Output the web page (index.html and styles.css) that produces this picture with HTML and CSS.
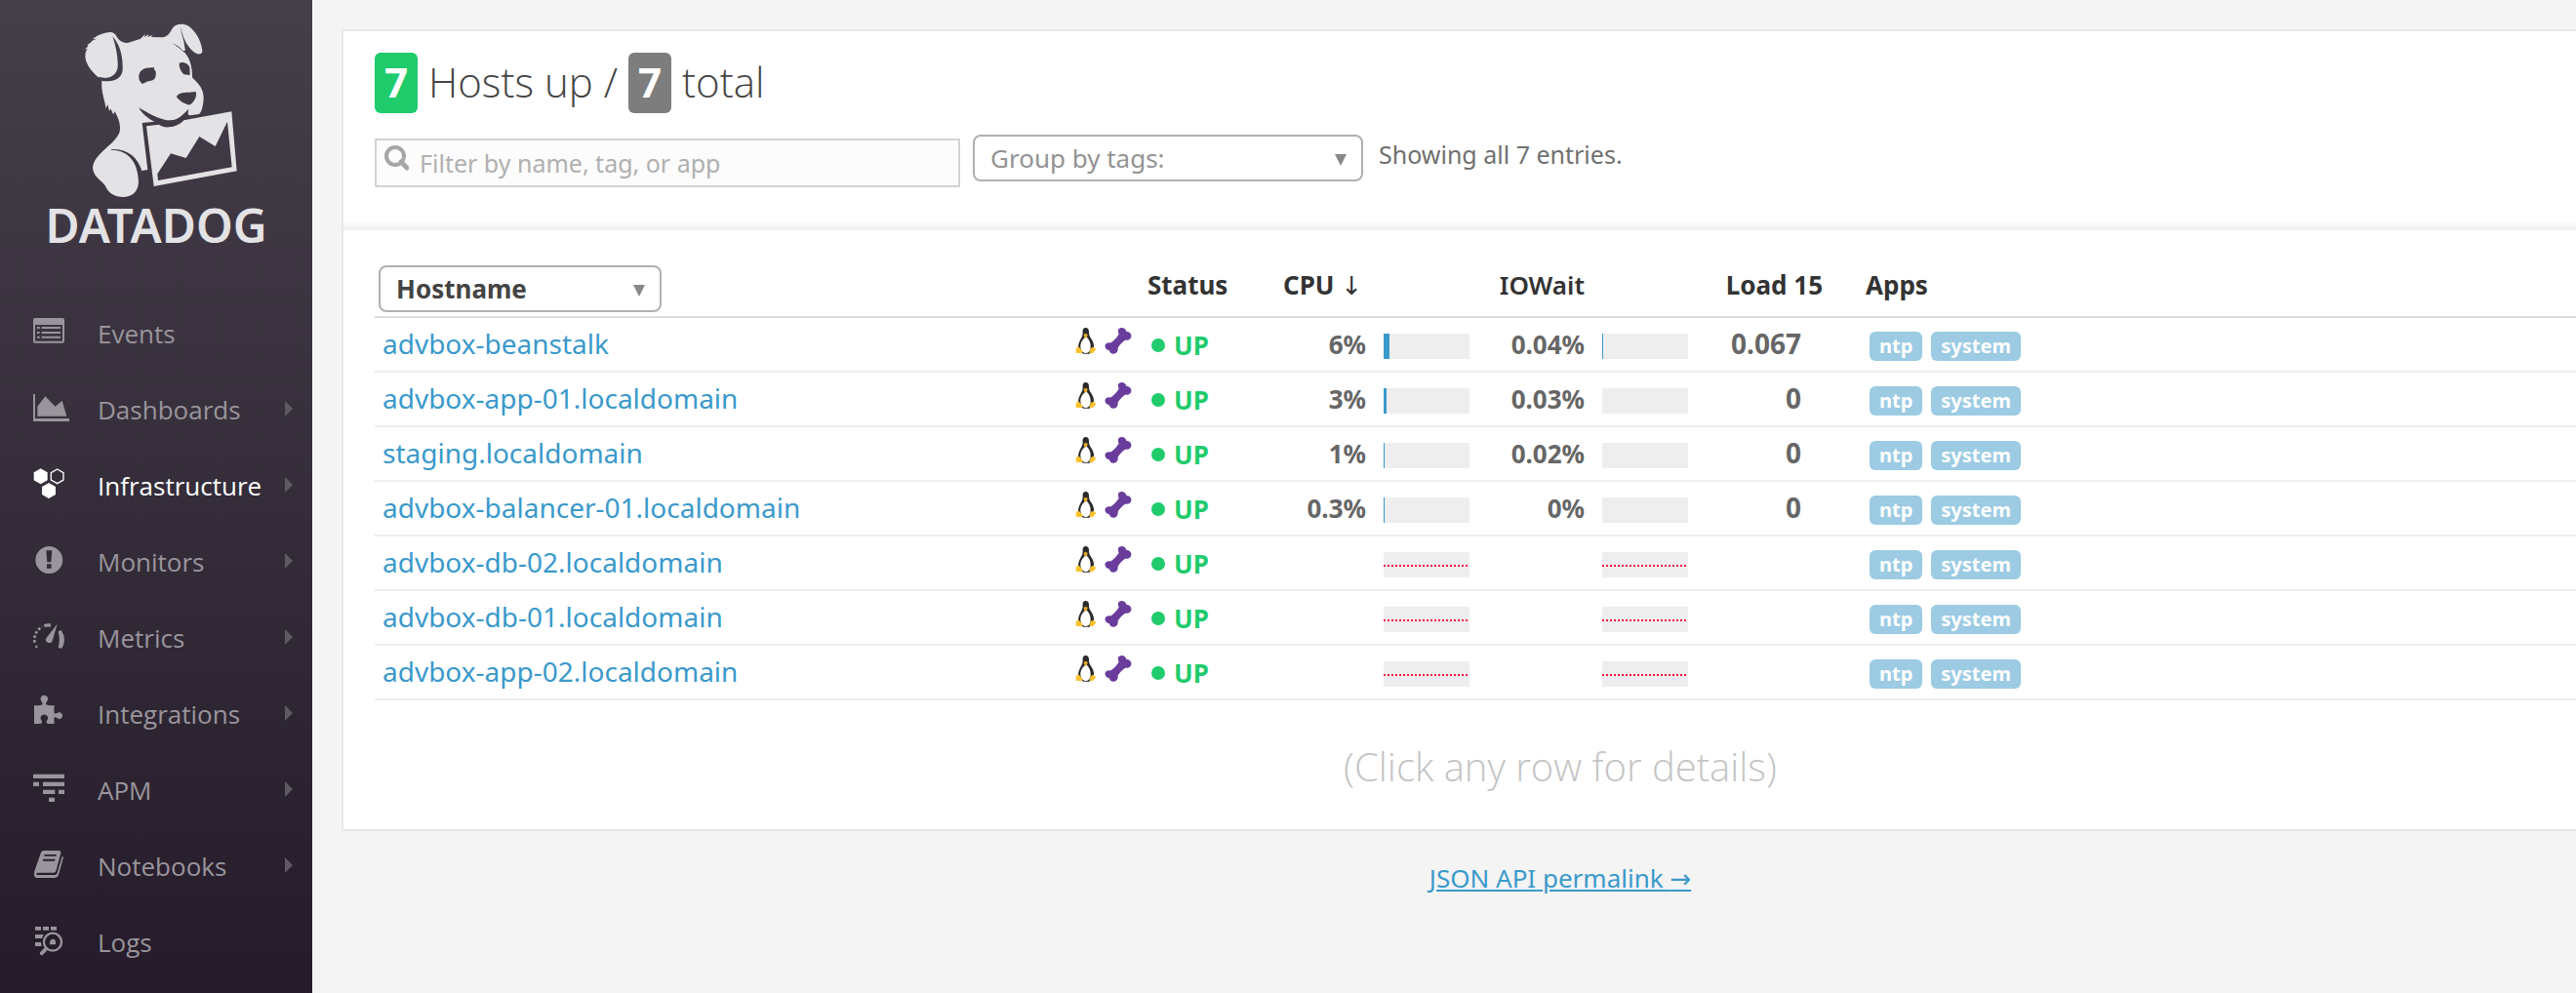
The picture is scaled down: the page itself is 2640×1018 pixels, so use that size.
FILE: index.html
```html
<!DOCTYPE html>
<html lang="en">
<head>
<meta charset="utf-8">
<title>Infrastructure List | Datadog</title>
<link rel="stylesheet" href="styles.css">
</head>
<body>
<svg class="sprite" aria-hidden="true">
  <symbol id="tux" viewBox="0 0 66 84">
    <path d="M32 0C24 0 22 7 23 16C23 25 19 31 15 38C11 46 8 54 10 62L24 80H44L57 62C59 52 54 40 48 32C43 25 42 20 42 12C42 4 38 0 32 0Z" fill="#2a2a2a"/>
    <path d="M30 30C23 36 15 46 16 60C18 74 26 78 33 78C42 78 47 70 47 58C48 46 42 36 36 30Z" fill="#fff"/>
    <path d="M26 20L33 17L38 21L36 29L31 32L27 28Z" fill="#e3a92b"/>
    <path d="M2 66L8 58L14 62L23 73L19 79L2 77Z" fill="#fbc02d"/>
    <path d="M47 63L56 59L64 67L53 79L43 77Z" fill="#fbc02d"/>
  </symbol>
  <symbol id="bone" viewBox="0 0 82 80">
    <path d="M44 2C52 -2 64 1 66 12C76 12 83 20 80 29C77 37 70 39 64 37C56 41 46 51 40 61C41 70 37 78 29 79C20 80 15 75 14 69C6 68 0 61 1 54C3 46 11 44 18 46C27 40 38 29 43 19C39 12 40 5 44 2Z" fill="#6a3c9c"/>
  </symbol>
  <symbol id="chevron" viewBox="0 0 8 16"><path d="M0 0L8 8L0 16Z"/></symbol>
  <symbol id="down" viewBox="0 0 12 12"><path d="M0 0H12L6 12Z"/></symbol>
</svg>

<div class="app">
  <aside class="sidebar">
    <a class="brand" href="#">
      <svg class="brand-dog" viewBox="0 60 960 558" aria-hidden="true">
        <mask id="dog" maskUnits="userSpaceOnUse" x="0" y="60" width="960" height="558">
          <g fill="#fff">
            <path d="M313 246C300 238 262 205 262 172C262 160 266 153 270 150L261 152L272 140L268 139L284 127L280 127L297 119L284 120C300 108 325 98 342 99C356 102 358 112 364 120C374 130 388 135 400 130L432 119L447 104L443 114L458 106L454 114L470 107L464 114L500 115C520 112 525 95 532 85C540 74 560 70 580 80C605 97 622 135 622 160C618 168 608 168 600 163C580 150 562 120 557 88L556 84C556 105 567 125 567 140L570 155L562 156C582 172 592 205 591 238C600 250 625 265 626 300C625 325 620 345 612 351L585 355C578 355 575 350 578 345L580 336L545 368L475 374L437 378L454 522L436 525L426 560C425 590 405 606 378 606C360 606 340 600 328 580C320 555 288 550 285 515C290 470 355 445 368 405C372 385 365 365 353 343L348 352L341 335L336 341L331 322L325 334C325 310 310 290 313 246Z"/>
            <path d="M450 388L490 383C505 395 540 395 565 370L712 343L728 526L473 573Z"/>
          </g>
          <g fill="#000">
            <path d="M346 112C372 140 378 180 377 215C375 240 350 255 312 248L300 236L325 240C345 238 358 228 362 207C364 180 356 140 346 112Z"/>
            <path d="M529 132C545 140 555 146 562 156L572 170C560 152 545 144 529 132Z"/>
            <path d="M427 238C426 215 445 206 474 208L474 214L479 220C481 240 475 249 455 250L438 258C430 252 427 246 427 238Z"/>
            <path d="M551 194C560 190 578 192 583 208L584 231L566 229C556 220 550 207 551 194Z"/>
            <path d="M543 298C545 288 560 284 580 284L602 282C606 295 600 310 585 322C575 325 550 310 543 298Z"/>
            <path d="M427 331C455 348 490 368 520 371C550 368 570 350 580 335L577 352L585 356L565 370C540 395 510 395 488 383L475 374C455 366 435 348 427 331Z"/>
            <path d="M342 459C392 455 424 485 436 525L437 570L426 560C425 505 400 462 342 461Z"/>
            <path d="M484 535L525 472L572 486L613 420L662 450L699 374L713 514L486 555Z"/>
          </g>
        </mask>
        <rect y="60" width="960" height="558" fill="#e3e2e5" mask="url(#dog)"/>
      </svg>
      <span class="brand-name">DATADOG</span>
    </a>
    <nav class="nav">
      <a class="nav-item" href="#">
        <svg class="nav-icon" viewBox="0 0 120 120"><path fill-rule="evenodd" d="M12 15H96Q102 15 102 21V86Q102 92 96 92H12Q6 92 6 86V21Q6 15 12 15ZM12 36V86H96V36Z"/><path d="M18 42h8v6h-8zM32 42h58v6h-58zM18 57h8v6h-8zM32 57h58v6h-58zM18 71h8v6h-8zM32 71h58v6h-58z"/></svg>
        <span class="nav-label">Events</span>
      </a>
      <a class="nav-item" href="#">
        <svg class="nav-icon" viewBox="0 0 120 120"><path d="M6 15H12V90H117V99H6ZM19 83V53L43 22L74 53L95 35L109 83Z"/></svg>
        <span class="nav-label">Dashboards</span>
        <svg class="nav-arrow"><use href="#chevron"/></svg>
      </a>
      <a class="nav-item is-active" href="#">
        <svg class="nav-icon" viewBox="0 0 120 120"><path d="M29 10L50 22V46L29 58L8 46V22ZM54 54L75 66V90L54 102L33 90V66Z"/><path d="M80 12L99 23V45L80 56L61 45V23Z" fill="none" stroke="currentColor" stroke-width="4"/></svg>
        <span class="nav-label">Infrastructure</span>
        <svg class="nav-arrow"><use href="#chevron"/></svg>
      </a>
      <a class="nav-item" href="#">
        <svg class="nav-icon" viewBox="0 0 120 120"><path fill-rule="evenodd" d="M55 15A42 42 0 1 1 54.900 15ZM46 28L49 64H61L64 28ZM48 70V83H62V70Z"/></svg>
        <span class="nav-label">Monitors</span>
        <svg class="nav-arrow"><use href="#chevron"/></svg>
      </a>
      <a class="nav-item" href="#">
        <svg class="nav-icon" viewBox="0 0 120 120"><path d="M80 20L65 72A10 10 0 1 1 46 64Z"/><path d="M83 43L92 39Q102 54 102 69Q101 84 94 95L83 93Q90 70 83 43Z"/><path d="M18 93A40 40 0 0 1 10 76" fill="none" stroke="currentColor" stroke-width="7" stroke-dasharray="7 20"/><path d="M11 77A43 43 0 0 1 34 29" fill="none" stroke="currentColor" stroke-width="8" stroke-dasharray="8 6"/><path d="M40 26Q48 23 60 24" fill="none" stroke="currentColor" stroke-width="10"/></svg>
        <span class="nav-label">Metrics</span>
        <svg class="nav-arrow"><use href="#chevron"/></svg>
      </a>
      <a class="nav-item" href="#">
        <svg class="nav-icon" viewBox="0 0 120 120"><path d="M9 36Q26 38 35 34Q35 28 31 23A11 11 0 1 1 49 23Q45 28 45 34Q55 38 71 36Q69 50 71 61Q76 62 80 60A10 10 0 1 1 80 76Q76 72 71 73Q69 82 71 92Q60 94 49 92Q44 88 49 82A11 11 0 1 0 31 82Q36 88 31 92Q20 94 9 93Z"/></svg>
        <span class="nav-label">Integrations</span>
        <svg class="nav-arrow"><use href="#chevron"/></svg>
      </a>
      <a class="nav-item" href="#">
        <svg class="nav-icon" viewBox="0 0 120 120"><path d="M6 14h96v13H6zM6 38h18v13H6zM36 38h66v13H36zM36 62h37v13H36zM84 62h18v13H84zM54 86h18v13H54z"/></svg>
        <span class="nav-label">APM</span>
        <svg class="nav-arrow"><use href="#chevron"/></svg>
      </a>
      <a class="nav-item" href="#">
        <svg class="nav-icon" viewBox="0 0 120 120"><path fill-rule="evenodd" d="M38 15H86Q92 16 91 23L76 78Q74 83 68 83H20Q14 84 16 90H72Q78 90 80 84L95 32L99 35L84 90Q80 99 73 99H18Q8 98 9 86L10 78L30 21Q33 15 38 15ZM41 27L39 32H76L78 27ZM37 41L35 47H72L74 41Z"/></svg>
        <span class="nav-label">Notebooks</span>
        <svg class="nav-arrow"><use href="#chevron"/></svg>
      </a>
      <a class="nav-item" href="#">
        <svg class="nav-icon" viewBox="0 0 120 120"><path d="M12 15h18v11H12zM36 15h18v11H36zM60 15h18v11H60zM12 39h26l-5 12H12zM12 63h18l2 12H12zM57 70V62Q60 52 67 53Q75 54 75 62V70Z"/><circle cx="66" cy="62" r="27" fill="none" stroke="currentColor" stroke-width="7"/><path d="M46 83L32 97" stroke="currentColor" stroke-width="11" stroke-linecap="round"/></svg>
        <span class="nav-label">Logs</span>
      </a>
    </nav>
  </aside>

  <main class="main">
    <div class="content">
      <section class="panel">
        <header class="panel-head">
          <h1 class="title"><span class="count count-up">7</span><span class="words">Hosts up /</span><span class="count">7</span><span class="words">total</span></h1>
          <div class="filters">
            <div class="search">
              <svg class="search-icon" viewBox="0 0 25 26" aria-hidden="true"><circle cx="11" cy="11" r="9" fill="none" stroke="#a6a6a6" stroke-width="4"/><path d="M17 17L23 23" stroke="#a6a6a6" stroke-width="5" stroke-linecap="round"/></svg>
              <input class="search-input" type="text" aria-label="Filter hosts" placeholder="Filter by name, tag, or app">
            </div>
            <div class="picker picker-group">
              <select class="picker-select" aria-label="Group by tags"><option>Group by tags:</option></select>
              <svg class="picker-arrow"><use href="#down"/></svg>
            </div>
            <p class="summary">Showing all 7 entries.</p>
          </div>
        </header>

        <div class="panel-body">
          <table class="hosts">
            <colgroup><col class="c-host"><col class="c-icons"><col class="c-status"><col class="c-cpu"><col class="c-bar"><col class="c-io"><col class="c-bar"><col class="c-load"><col></colgroup>
            <thead>
              <tr>
                <th>
                  <div class="picker picker-host">
                    <select class="picker-select" aria-label="Host label"><option>Hostname</option></select>
                    <svg class="picker-arrow"><use href="#down"/></svg>
                  </div>
                </th>
                <th></th><th>Status</th><th class="num sorted">CPU <span class="arrow">↓</span></th><th></th><th class="num iowait">IOWait</th><th></th><th class="num">Load 15</th><th class="apps">Apps</th>
              </tr>
            </thead>
            <tbody>
              <tr>
                <td class="host"><a href="#">advbox-beanstalk</a></td>
                <td class="icons"><svg class="tux"><use href="#tux"/></svg><svg class="bone"><use href="#bone"/></svg></td>
                <td class="status"><span class="up">UP</span></td>
                <td class="num">6%</td>
                <td class="meter"><span class="bar"><i class="fill" style="width:6px"></i></span></td>
                <td class="num">0.04%</td>
                <td class="meter"><span class="bar"><i class="fill" style="width:1px"></i></span></td>
                <td class="num load">0.067</td>
                <td class="apps"><span class="tag">ntp</span><span class="tag">system</span></td>
              </tr>
              <tr>
                <td class="host"><a href="#">advbox-app-01.localdomain</a></td>
                <td class="icons"><svg class="tux"><use href="#tux"/></svg><svg class="bone"><use href="#bone"/></svg></td>
                <td class="status"><span class="up">UP</span></td>
                <td class="num">3%</td>
                <td class="meter"><span class="bar"><i class="fill" style="width:3px"></i></span></td>
                <td class="num">0.03%</td>
                <td class="meter"><span class="bar"></span></td>
                <td class="num load">0</td>
                <td class="apps"><span class="tag">ntp</span><span class="tag">system</span></td>
              </tr>
              <tr>
                <td class="host"><a href="#">staging.localdomain</a></td>
                <td class="icons"><svg class="tux"><use href="#tux"/></svg><svg class="bone"><use href="#bone"/></svg></td>
                <td class="status"><span class="up">UP</span></td>
                <td class="num">1%</td>
                <td class="meter"><span class="bar"><i class="fill" style="width:1px"></i></span></td>
                <td class="num">0.02%</td>
                <td class="meter"><span class="bar"></span></td>
                <td class="num load">0</td>
                <td class="apps"><span class="tag">ntp</span><span class="tag">system</span></td>
              </tr>
              <tr>
                <td class="host"><a href="#">advbox-balancer-01.localdomain</a></td>
                <td class="icons"><svg class="tux"><use href="#tux"/></svg><svg class="bone"><use href="#bone"/></svg></td>
                <td class="status"><span class="up">UP</span></td>
                <td class="num">0.3%</td>
                <td class="meter"><span class="bar"><i class="fill" style="width:1px"></i></span></td>
                <td class="num">0%</td>
                <td class="meter"><span class="bar"></span></td>
                <td class="num load">0</td>
                <td class="apps"><span class="tag">ntp</span><span class="tag">system</span></td>
              </tr>
              <tr>
                <td class="host"><a href="#">advbox-db-02.localdomain</a></td>
                <td class="icons"><svg class="tux"><use href="#tux"/></svg><svg class="bone"><use href="#bone"/></svg></td>
                <td class="status"><span class="up">UP</span></td>
                <td></td>
                <td class="meter"><span class="bar no-data"></span></td>
                <td></td>
                <td class="meter"><span class="bar no-data"></span></td>
                <td></td>
                <td class="apps"><span class="tag">ntp</span><span class="tag">system</span></td>
              </tr>
              <tr>
                <td class="host"><a href="#">advbox-db-01.localdomain</a></td>
                <td class="icons"><svg class="tux"><use href="#tux"/></svg><svg class="bone"><use href="#bone"/></svg></td>
                <td class="status"><span class="up">UP</span></td>
                <td></td>
                <td class="meter"><span class="bar no-data"></span></td>
                <td></td>
                <td class="meter"><span class="bar no-data"></span></td>
                <td></td>
                <td class="apps"><span class="tag">ntp</span><span class="tag">system</span></td>
              </tr>
              <tr>
                <td class="host"><a href="#">advbox-app-02.localdomain</a></td>
                <td class="icons"><svg class="tux"><use href="#tux"/></svg><svg class="bone"><use href="#bone"/></svg></td>
                <td class="status"><span class="up">UP</span></td>
                <td></td>
                <td class="meter"><span class="bar no-data"></span></td>
                <td></td>
                <td class="meter"><span class="bar no-data"></span></td>
                <td></td>
                <td class="apps"><span class="tag">ntp</span><span class="tag">system</span></td>
              </tr>
            </tbody>
          </table>
          <p class="hint">(Click any row for details)</p>
        </div>
      </section>
      <p class="permalink"><a href="#">JSON API permalink <span class="arrow">→</span></a></p>
    </div>
  </main>
</div>
</body>
</html>
```
FILE: styles.css
```css
* {
  box-sizing: border-box;
}

body {
  margin: 0;
  background: #f4f4f4;
  color: #666;
  font-family: "Noto Sans", "Open Sans", sans-serif;
  font-size: 26px;
}

h1,
p {
  margin: 0;
}

.sprite {
  display: none;
}

.app {
  display: flex;
  min-height: 100vh;
}

/* Sidebar */
.sidebar {
  flex: none;
  width: 320px;
  padding-top: 20px;
  background: linear-gradient(#453f4a, #251b2a);
}

.brand {
  display: flex;
  flex-direction: column;
  align-items: center;
  color: #e3e2e5;
  text-decoration: none;
}

.brand-dog {
  width: 320px;
  height: 186px;
}

.brand-name {
  font-size: 48px;
  font-weight: 600;
  line-height: 50px;
}

.nav {
  margin-top: 46px;
}

.nav-item {
  display: flex;
  align-items: center;
  height: 78px;
  padding: 0 20px 0 32px;
  color: #99959c;
  font-family: "Open Sans", sans-serif;
  text-decoration: none;
}

.nav-item.is-active {
  color: #fff;
}

.nav-icon {
  width: 40px;
  height: 40px;
  fill: currentColor;
}

.nav-label {
  flex: 1;
  margin-left: 28px;
  padding-top: 2px;
}

.nav-arrow {
  width: 8px;
  height: 16px;
  fill: #5f5964;
}

/* The content is wider than its column and is clipped on the right */
.main {
  flex: 1;
  min-width: 0;
  overflow: hidden;
}

.content {
  margin-right: -208px;
  padding: 30px 0 0 30px;
}

.panel {
  border: 2px solid #e8e8e8;
  background: #fff;
}

.panel-head {
  padding: 22px 32px 44px;
  background: linear-gradient(#fff, #eee) bottom / 100% 10px no-repeat;
}

.title {
  display: flex;
  align-items: center;
  gap: 11px;
  height: 62px;
  color: #444;
  font-family: "Open Sans", sans-serif;
  font-size: 42px;
  font-weight: 300;
}

.count {
  width: 44px;
  height: 62px;
  border-radius: 6px;
  background: #7d7d7d;
  color: #fff;
  font-weight: 700;
  line-height: 60px;
  text-align: center;
}

.count-up {
  background: #1fcb6b;
}

.words {
  height: 62px;
  line-height: 60px;
}

.filters {
  display: flex;
  align-items: flex-start;
  margin-top: 22px;
}

.search {
  position: relative;
  margin: 4px 13px 0 0;
}

.search-icon {
  position: absolute;
  top: 7px;
  left: 10px;
  width: 25px;
  height: 26px;
}

.search-input {
  display: block;
  width: 600px;
  height: 50px;
  padding: 0 12px 0 44px;
  border: 2px solid #d3d3d3;
  background: #fcfcfc;
  color: #444;
  font: 25px "Noto Sans", sans-serif;
}

.search-input::placeholder {
  color: #b0b0b0;
}

.picker {
  position: relative;
  height: 48px;
}

.picker-group {
  width: 400px;
}

.picker-host {
  width: 290px;
  margin-left: 4px;
}

.picker-select {
  display: block;
  width: 100%;
  height: 100%;
  padding: 0 36px 0 16px;
  border: 2px solid #b0b0b0;
  border-radius: 8px;
  background: #fff;
  color: #939393;
  font: 26px "Noto Sans", sans-serif;
  appearance: none;
}

.picker-host .picker-select {
  color: #444;
  font-weight: 700;
}

.picker-arrow {
  position: absolute;
  top: 20px;
  right: 17px;
  width: 12px;
  height: 12px;
  fill: #888;
  pointer-events: none;
}

.summary {
  margin-left: 16px;
  color: #707070;
  font-size: 25px;
  line-height: 40px;
}

/* Host table */
.panel-body {
  padding: 36px 32px 0;
}

.hosts {
  width: 100%;
  border-spacing: 0;
  table-layout: fixed;
}

.c-host {
  width: 710px;
}

.c-icons {
  width: 82px;
}

.c-status {
  width: 110px;
}

.c-cpu {
  width: 114px;
}

.c-bar {
  width: 120px;
}

.c-io {
  width: 104px;
}

.c-load {
  width: 124px;
}

th {
  height: 54px;
  padding: 0;
  border-bottom: 2px solid #ddd;
  color: #333;
  line-height: 40px;
  text-align: left;
  vertical-align: top;
  white-space: nowrap;
}

td {
  height: 56px;
  padding: 0;
  border-bottom: 2px solid #eee;
  line-height: 36px;
}

.num {
  font-weight: 700;
  text-align: right;
}

.sorted {
  padding-right: 4px;
}

.iowait {
  font-weight: 600;
}

.arrow {
  font-family: "DejaVu Sans", sans-serif;
  font-weight: 400;
}

.load {
  padding: 0 22px 2px 0;
  font-size: 28px;
}

.host {
  padding: 0 0 2px 8px;
  font-size: 28px;
}

a {
  color: #3a99cb;
}

.host a {
  text-decoration: none;
}

.icons svg {
  display: inline-block;
  vertical-align: top;
}

.icons {
  padding: 0 0 6px 8px;
  line-height: 28px;
}

.tux {
  width: 22px;
  height: 28px;
  margin-right: 8px;
}

.bone {
  width: 28px;
  height: 27px;
}

.up {
  display: flex;
  align-items: center;
  gap: 9px;
  padding: 2px 0 0 4px;
  color: #1fcb6b;
  font-weight: 700;
}

.up::before {
  width: 14px;
  height: 14px;
  border-radius: 50%;
  background: currentColor;
  content: "";
}

.meter {
  padding: 4px 0 0 18px;
}

.bar {
  display: flex;
  align-items: center;
  width: 88px;
  height: 26px;
  background: #eee;
}

.fill {
  height: 100%;
  background: #3a99cb;
}

.no-data::before {
  width: 100%;
  height: 2px;
  margin-top: 2px;
  background: repeating-linear-gradient(90deg, #f8153f 0 2px, transparent 2px 4px);
  content: "";
}

th.apps {
  padding-left: 44px;
}

td.apps {
  padding: 4px 0 0 48px;
  line-height: 30px;
}

.tag {
  display: inline-block;
  margin-right: 9px;
  padding: 0 10px;
  border-radius: 6px;
  background: #9ccbe3;
  color: #fff;
  font-size: 20px;
  font-weight: 700;
  vertical-align: top;
}

.hint {
  padding: 38px 0 34px;
  color: #c4c4c4;
  font-family: "Open Sans", sans-serif;
  font-size: 40px;
  font-weight: 300;
  line-height: 60px;
  text-align: center;
}

.permalink {
  padding-top: 28px;
  line-height: 40px;
  text-align: center;
}
```
